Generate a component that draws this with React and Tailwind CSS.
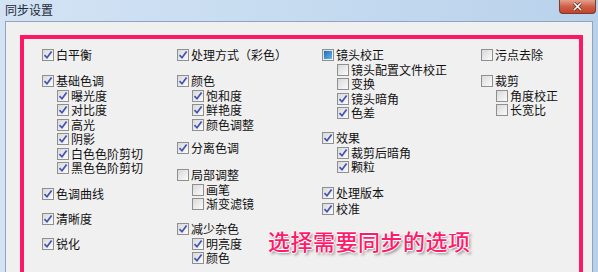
import React from 'react';

const font = { fontFamily: '"Noto Sans CJK SC", "Microsoft YaHei", sans-serif' };

function Box({ state }) {
  return (
    <span className="relative flex h-[12px] w-[12px] shrink-0 items-center justify-center border border-[#8e8f8f] bg-gradient-to-br from-[#d9d9d9] to-[#fbfbfb]">
      {state === 'on' && (
        <svg width="10" height="10" viewBox="0 0 10 10" className="absolute">
          <path d="M1.5 5.2 L4 7.8 L8.6 1.6" fill="none" stroke="#4152b3" strokeWidth="1.7" />
        </svg>
      )}
      {state === 'mixed' && (
        <span className="h-[8px] w-[8px] bg-gradient-to-br from-[#1b6cb8] to-[#63b8ec]" />
      )}
    </span>
  );
}

function Row({ label, state = 'on', sub, mt = '' }) {
  return (
    <div className={`flex h-[14.5px] items-center gap-[2px] ${sub ? 'pl-[15px]' : ''} ${mt}`}>
      <Box state={state} />
      <span className="text-[12px] leading-none whitespace-nowrap text-[#111]">{label}</span>
    </div>
  );
}

export default function App() {
  return (
    <div className="flex h-[272px] w-[598px] flex-col overflow-hidden bg-gradient-to-r from-[#d3e3f4] via-[#c6dbf0] to-[#b9d1eb]" style={font}>
      {/* title bar */}
      <div className="flex h-[21px] shrink-0 items-start justify-between">
        <span className="pl-[5px] pt-[3px] text-[12px] leading-[14px] text-[#1c2a3a]">同步设置</span>
        <div className="mr-[2px] flex h-[14px] w-[37px] items-center justify-center rounded-b-[4px] border border-t-0 border-[#7a3b30] bg-gradient-to-b from-[#e3a08e] via-[#cf5f45] to-[#c3432c]">
          <svg width="11" height="9" viewBox="0 0 11 9">
            <path d="M2 1 L9 8 M9 1 L2 8" stroke="#5a2a22" strokeWidth="3" />
            <path d="M2 1 L9 8 M9 1 L2 8" stroke="#ffffff" strokeWidth="1.6" />
          </svg>
        </div>
      </div>

      {/* client area */}
      <div className="ml-[5px] mr-[5px] flex-1 border border-b-0 border-[#8fa5bf] bg-[#f0f0f0] pl-[14px] pt-[13px]">
        <div className="relative h-[260px] w-[563px] border-4 border-[#fe1763] pl-[18px] pt-[9px]">
          <div className="grid grid-cols-[135px_145px_159px_1fr]">
            <div className="flex flex-col">
              <Row label="白平衡" />
              <Row label="基础色调" mt="mt-[11.5px]" />
              <Row label="曝光度" sub />
              <Row label="对比度" sub />
              <Row label="高光" sub />
              <Row label="阴影" sub />
              <Row label="白色色阶剪切" sub />
              <Row label="黑色色阶剪切" sub />
              <Row label="色调曲线" mt="mt-[11px]" />
              <Row label="清晰度" mt="mt-[10.5px]" />
              <Row label="锐化" mt="mt-[10.5px]" />
            </div>
            <div className="flex flex-col">
              <Row label="处理方式（彩色）" />
              <Row label="颜色" mt="mt-[11.5px]" />
              <Row label="饱和度" sub />
              <Row label="鲜艳度" sub />
              <Row label="颜色调整" sub />
              <Row label="分离色调" mt="mt-[9px]" />
              <Row label="局部调整" state="off" mt="mt-[12.5px]" />
              <Row label="画笔" state="off" sub />
              <Row label="渐变滤镜" state="off" sub />
              <Row label="减少杂色" mt="mt-[10.5px]" />
              <Row label="明亮度" sub />
              <Row label="颜色" sub />
            </div>
            <div className="flex flex-col">
              <Row label="镜头校正" state="mixed" />
              <Row label="镜头配置文件校正" state="off" sub />
              <Row label="变换" state="off" sub />
              <Row label="镜头暗角" sub />
              <Row label="色差" sub />
              <Row label="效果" mt="mt-[10.5px]" />
              <Row label="裁剪后暗角" sub />
              <Row label="颗粒" sub />
              <Row label="处理版本" mt="mt-[11.5px]" />
              <Row label="校准" mt="mt-[1px]" />
            </div>
            <div className="flex flex-col">
              <Row label="污点去除" state="off" />
              <Row label="裁剪" state="off" mt="mt-[11.5px]" />
              <Row label="角度校正" state="off" sub />
              <Row label="长宽比" state="off" sub />
            </div>
          </div>

          {/* annotation */}
          <div className="absolute left-[244px] top-[190px] text-[22px] font-medium leading-none tracking-[0.5px] text-[#ff1a6b] [text-shadow:1px_0_0_#fff,-1px_0_0_#fff,0_1px_0_#fff,0_-1px_0_#fff,2px_2px_3px_rgba(0,0,0,0.45)]">
            选择需要同步的选项
          </div>
        </div>
      </div>
    </div>
  );
}
